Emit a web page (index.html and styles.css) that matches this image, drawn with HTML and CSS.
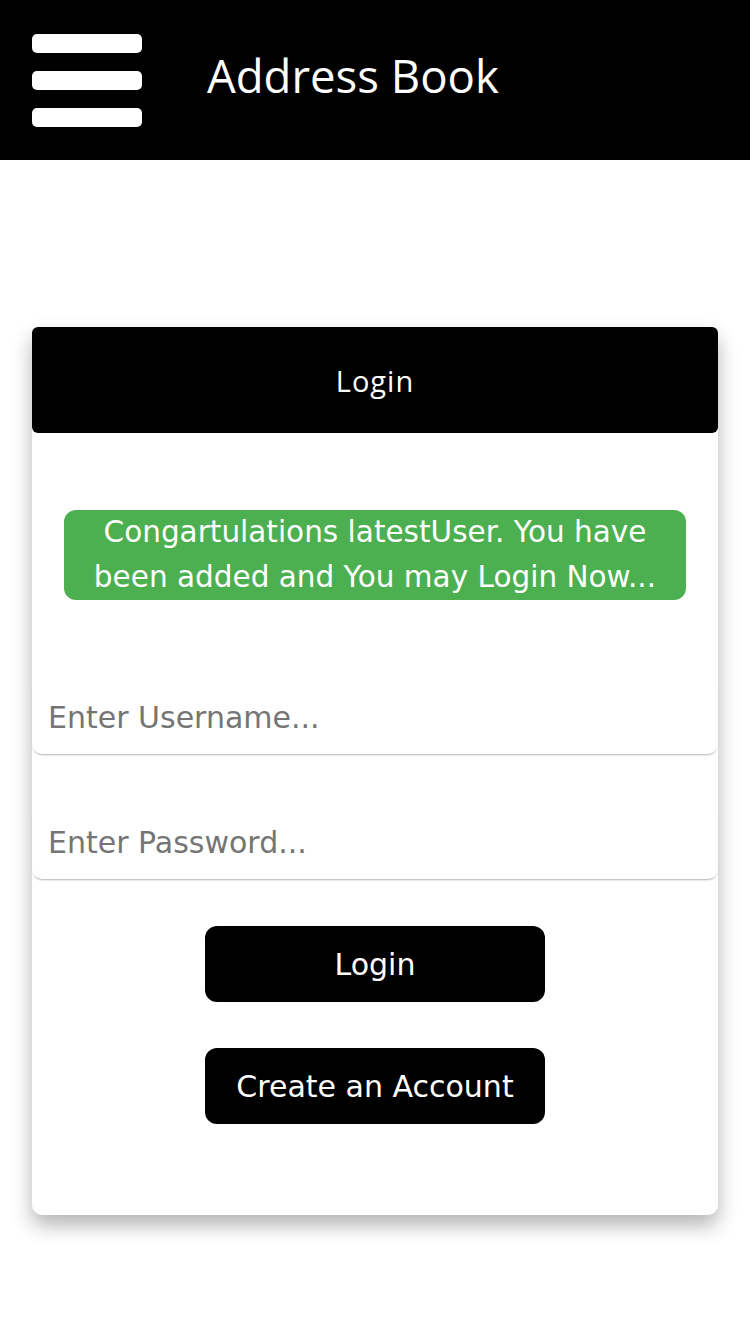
FILE: index.html
```html
<!DOCTYPE html>
<html lang="en">
<head>
<meta charset="utf-8">
<title>Address Book</title>
<link rel="stylesheet" href="styles.css">
</head>
<body>
<header class="topbar">
  <div class="hamburger" aria-label="Menu">
    <span class="bar"></span>
    <span class="bar"></span>
    <span class="bar"></span>
  </div>
  <h1 class="title">Address Book</h1>
</header>
<main class="main">
  <section class="card">
    <div class="card-header">Login</div>
    <div class="card-body">
      <div class="message">Congartulations latestUser. You have been added and You may Login Now...</div>
      <input class="field field-user" type="text" placeholder="Enter Username...">
      <input class="field field-pass" type="password" placeholder="Enter Password...">
      <button class="btn btn-login" type="button">Login</button>
      <button class="btn btn-create" type="button">Create an Account</button>
    </div>
  </section>
</main>
</body>
</html>
```
FILE: styles.css
```css
* { box-sizing: border-box; }
html, body { margin: 0; padding: 0; background: #fff; }
body { font-family: "DejaVu Sans", "Noto Sans", sans-serif; }

.topbar {
  height: 160px;
  background: #000;
  display: flex;
  align-items: center;
  padding-left: 32px;
}
.hamburger {
  width: 110px;
  display: flex;
  flex-direction: column;
  gap: 18px;
}
.bar {
  display: block;
  height: 19px;
  background: #fff;
  border-radius: 5px;
}
.title {
  margin: 0 0 10px 65px;
  color: #fff;
  font-family: "Open Sans", "Noto Sans", sans-serif;
  font-weight: 400;
  font-size: 45.5px;
}

.main { padding: 167px 32px 120px; }

.card {
  background: #fff;
  border-radius: 10px;
  box-shadow: 0 10px 20px rgba(0,0,0,0.3);
}
.card-header {
  height: 106px;
  background: #000;
  color: #fff;
  border-radius: 6px;
  display: flex;
  align-items: center;
  justify-content: center;
  font-family: "Open Sans", "Noto Sans", sans-serif;
  font-size: 29px;
  letter-spacing: 1px;
}
.card-body {
  display: flex;
  flex-direction: column;
  align-items: center;
  padding: 77px 0 91px;
}
.message {
  align-self: stretch;
  margin: 0 32px;
  padding: 0 8px;
  background: #4caf50;
  color: #fff;
  border-radius: 12px;
  text-align: center;
  font-size: 29.5px;
  line-height: 45px;
}
.field {
  align-self: stretch;
  height: 74px;
  border: none;
  border-radius: 10px;
  box-shadow: 0 2px 2px -1px rgba(0,0,0,0.3);
  padding: 0 16px;
  font-family: "DejaVu Sans", sans-serif;
  font-size: 30px;
  color: #333;
  outline: none;
  background: #fff;
}
.field::placeholder { color: #757575; }
.field-user { margin-top: 80px; }
.field-pass { margin-top: 51px; }
.btn {
  width: 340px;
  height: 76px;
  border: none;
  border-radius: 12px;
  background: #000;
  color: #fff;
  font-family: "DejaVu Sans", sans-serif;
  font-size: 30px;
  padding: 0;
}
.btn-login { margin-top: 47px; }
.btn-create { margin-top: 46px; }
```
